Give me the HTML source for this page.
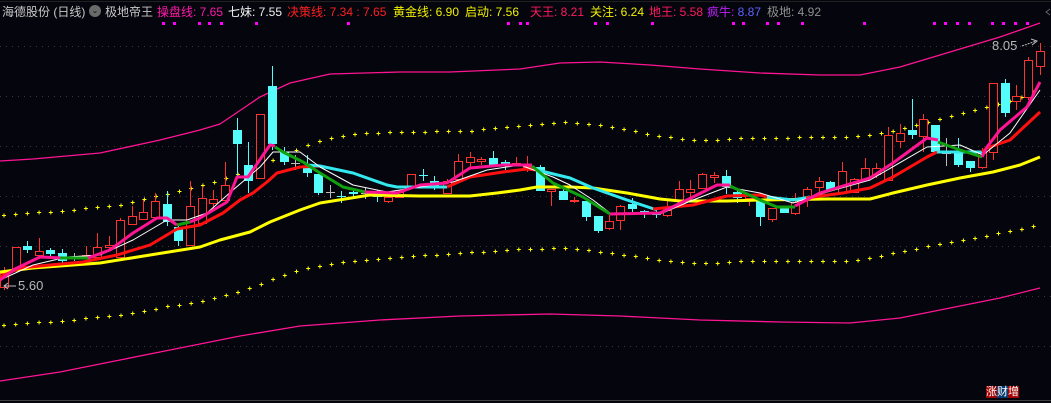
<!DOCTYPE html>
<html><head><meta charset="utf-8"><style>
html,body{margin:0;padding:0;background:#05050d;}
#w{position:relative;width:1051px;height:403px;overflow:hidden;background:#05050d;font-family:"Liberation Sans","Noto Sans CJK SC",sans-serif;font-size:12px;}
.t{position:absolute;top:5px;white-space:nowrap;line-height:14px;}
svg{position:absolute;left:0;top:0;}
</style></head><body><div id="w">
<svg id="s" width="1051" height="403" viewBox="0 0 1051 403"></svg>
<span class="t" style="left:2px;color:#c8c8c8">海德股份 (日线)</span>
<span class="t" style="left:89px;top:5px;width:12px;height:12px;border-radius:50%;background:#6a6a6a;color:#111;font-size:8px;text-align:center;line-height:12px">&#8964;</span>
<span class="t" style="left:105px;color:#c8c8c8">极地帝王</span>
<span class="t" style="left:157px;color:#ff1aa8">操盘线: 7.65</span>
<span class="t" style="left:228px;color:#f0f0f0">七妹: 7.55</span>
<span class="t" style="left:287px;color:#ff2020">决策线: 7.34 : 7.65</span>
<span class="t" style="left:393px;color:#f0f000">黄金线: 6.90</span>
<span class="t" style="left:465px;color:#f0f000">启动: 7.56</span>
<span class="t" style="left:530px;color:#ff1a60">天王: 8.21</span>
<span class="t" style="left:590px;color:#f0f000">关注: 6.24</span>
<span class="t" style="left:649px;color:#ff1a60">地王: 5.58</span>
<span class="t" style="left:707px;color:#c020ff">疯牛: <span style="color:#6060ff">8.87</span></span>
<span class="t" style="left:767px;color:#909090">极地: 4.92</span>
<span class="t" style="left:992px;top:39px;color:#b8b8b8;font-size:13px">8.05</span>
<span class="t" style="left:18px;top:279px;color:#b8b8b8;font-size:13px">5.60</span>
<span class="t" style="left:986px;top:386px;font-size:11px;line-height:13px;color:#fff"><span style="background:#a00000">涨</span><span style="background:#0a3a70">财</span><span style="background:#a00000">增</span></span>
</div>
<script>
var s=document.getElementById('s'),h='';
function pl(pts,c,w){h+='<polyline points="'+pts+'" fill="none" stroke="'+c+'" stroke-width="'+w+'" stroke-linejoin="round"/>';}
[46,96,146,196,246,296,346].forEach(function(y){h+='<line x1="0" y1="'+y+'.5" x2="1051" y2="'+y+'.5" stroke="#3a3a3a" stroke-width="1" stroke-dasharray="1,5"/>';});
h+='<line x1="0" y1="400.5" x2="1051" y2="400.5" stroke="#404040"/>';
h+='<line x1="0" y1="1.5" x2="1051" y2="1.5" stroke="#202020"/>';
[163,174,199,209,221,256,348,508,520,527,595,607,652,733,743,767,778,802,864,934,945,957,969,992,1003,1015,1027].forEach(function(x){h+='<rect x="'+(x-1)+'" y="22" width="3" height="3" fill="#ff00ff"/>';});
pl("0,161 33,159 100,153 160,140 200,130 220,124 260,97 290,83 330,74 400,72 450,72 520,69 560,63 600,62 650,65 700,69 760,73 820,75 860,75 900,67 950,52 1000,37 1040,23",'#ff1493',1.3);
pl("0,381 60,372 120,360 180,348 240,336 300,326 380,320 460,316 550,314 620,316 700,320 780,322 850,323 900,318 950,308 1000,298 1040,288",'#ff1493',1.3);
function interp(P,x){for(var i=0;i<P.length-1;i++){if(x>=P[i][0]&&x<=P[i+1][0]){var t=(x-P[i][0])/(P[i+1][0]-P[i][0]);return P[i][1]+t*(P[i+1][1]-P[i][1]);}}return P[P.length-1][1];}
var U=[[0,215],[61,211],[119,205],[166,194],[212,183],[247,171],[294,151],[317,141],[352,134],[387,132],[470,131],[503,127],[561,122],[585,123],[619,128],[654,135],[689,140],[713,140],[736,138],[841,137],[864,136],[899,130],[934,120],[969,111],[1003,103],[1040,90]];
var L=[[0,325],[60,321],[120,315],[170,306],[212,299],[247,289],[294,271],[340,262],[400,257],[460,253],[526,249],[561,248],[585,250],[619,254],[654,259],[689,263],[713,263],[747,261],[841,261],[864,259],[900,252],[940,244],[980,237],[1010,231],[1040,225]];
for(var i=0;i<89;i++){var x=3.5+i*11.7;[U,L].forEach(function(P){var y=Math.round(interp(P,x));h+='<path d="M'+(x-1.5)+' '+(y+.5)+'h4M'+(x+.5)+' '+(y-1.5)+'v4" stroke="#ffff00" stroke-width="1"/>';});}
var C=[[4,273,287,267,290,'r'],[16,247,268,247,268,'r'],[27,246,250,241,253,'c'],[39,251,255,238,255,'r'],[50,250,254,248,256,'c'],[62,253,261,249,263,'c'],[74,257,257,253,261,'g'],[86,255,256,246,258,'r'],[97,247,257,233,257,'r'],[109,245,247,236,250,'r'],[120,220,257,218,257,'r'],[132,216,224,206,224,'r'],[143,212,219,200,219,'r'],[155,201,217,193,217,'r'],[167,204,222,191,226,'c'],[178,227,241,225,246,'c'],[190,206,245,181,245,'r'],[202,198,223,187,223,'r'],[213,199,203,190,210,'r'],[225,185,200,162,200,'r'],[237,130,144,118,178,'c'],[248,165,181,142,193,'c'],[260,114,178,114,178,'r'],[272,86,144,66,150,'c'],[284,152,162,147,165,'c'],[295,163,163,155,170,'g'],[307,167,173,155,177,'c'],[318,174,193,174,195,'c'],[330,192,192,185,198,'g'],[341,196,196,191,203,'x'],[353,192,193,188,197,'c'],[365,193,193,188,199,'g'],[377,192,197,190,202,'c'],[388,197,201,195,203,'r'],[399,192,197,190,197,'r'],[411,174,187,174,187,'r'],[423,175,175,169,181,'x'],[434,181,186,176,190,'c'],[447,181,193,179,193,'r'],[458,161,179,154,179,'r'],[470,157,162,152,169,'r'],[481,159,161,157,165,'r'],[493,158,167,151,167,'c'],[505,162,165,160,170,'c'],[516,163,165,157,165,'r'],[527,166,166,156,172,'r'],[540,167,191,165,191,'c'],[551,189,191,189,206,'r'],[563,191,200,188,200,'c'],[574,200,200,197,203,'r'],[586,201,217,201,221,'c'],[598,216,231,216,233,'c'],[609,221,228,215,230,'r'],[620,206,220,205,230,'r'],[632,204,209,198,212,'c'],[644,211,214,210,218,'c'],[656,212,215,210,218,'c'],[667,210,215,200,217,'r'],[679,189,200,181,200,'r'],[690,189,192,180,197,'r'],[702,174,188,173,188,'r'],[714,175,177,172,183,'r'],[726,176,187,170,194,'c'],[737,192,198,190,203,'c'],[749,195,198,195,206,'r'],[760,200,217,200,226,'c'],[772,208,219,208,222,'r'],[784,208,213,208,213,'c'],[795,202,213,193,215,'r'],[807,189,199,187,207,'r'],[819,181,187,177,192,'r'],[830,182,190,181,190,'c'],[842,171,192,162,192,'r'],[854,179,192,178,192,'r'],[865,168,179,158,179,'r'],[876,168,174,163,178,'r'],[888,135,180,127,180,'r'],[900,133,141,124,148,'r'],[912,130,135,99,139,'c'],[923,119,136,114,152,'r'],[935,125,152,125,152,'c'],[946,153,153,138,166,'g'],[958,153,165,138,167,'c'],[970,161,168,161,172,'c'],[982,152,167,148,169,'r'],[993,83,152,83,160,'r'],[1005,83,113,79,117,'c'],[1016,96,101,85,110,'r'],[1028,60,97,57,100,'r'],[1040,51,66,43,75,'r']];
C.forEach(function(c){var x=c[0],t=c[5];
if(t=='r'){h+='<line x1="'+(x+.5)+'" y1="'+c[3]+'" x2="'+(x+.5)+'" y2="'+c[4]+'" stroke="#ff3232"/>';
 if(c[2]-c[1]<2)h+='<rect x="'+(x-4)+'" y="'+c[1]+'" width="9" height="2" fill="#ff3232"/>';
 else h+='<rect x="'+(x-3.5)+'" y="'+(c[1]+.5)+'" width="8" height="'+(c[2]-c[1])+'" fill="#05050d" stroke="#ff3232"/>';}
else if(t=='c'){h+='<line x1="'+(x+.5)+'" y1="'+c[3]+'" x2="'+(x+.5)+'" y2="'+c[4]+'" stroke="#54fcfc"/><rect x="'+(x-4)+'" y="'+c[1]+'" width="9" height="'+Math.max(2,c[2]-c[1])+'" fill="#54fcfc"/>';}
else{var col=t=='x'?'#54fcfc':'#bbbbbb';h+='<path d="M'+(x-4)+' '+(c[1]+.5)+'h9M'+(x+.5)+' '+c[3]+'V'+c[4]+'" stroke="'+col+'"/>';}
});
pl("0,272 33,268 100,263 150,255 200,247 220,240 250,232 270,222 300,210 320,203 370,195 420,196 470,196 497,193 520,190 537,187 570,187 593,188 627,193 660,199 680,201 727,201 760,200 827,199 870,199 893,193 927,185 960,178 993,172 1020,165 1040,157",'#ffff00',3);
pl("0,277 20,268 50,265 83,262 117,255 150,245 177,229 200,225 223,213 240,200 253,193 267,182 277,173 300,167 320,166",'#ff1010',3);
pl("307,165 320,166 353,173 387,185 397,187 447,187",'#33e8ee',3);
pl("447,187 470,177 503,172 527,169 537,170",'#ff1010',3);
pl("537,170 570,178 593,188 627,200 657,210",'#33e8ee',3);
pl("653,209 693,205 727,196 760,195 767,197",'#ff1010',3);
pl("767,197 793,200 810,197",'#33e8ee',3);
pl("806,198 843,193 870,188 893,177 927,157 937,152",'#ff1010',3);
pl("937,152 982,152",'#33e8ee',3);
pl("982,152 987,148 1010,140 1040,112",'#ff1010',3);
pl("0,280 33,265 67,257 100,255 133,240 167,220 187,220 207,213 233,190 260,167 273,152 300,152 320,167 353,185 387,192 420,187 453,182 487,170 520,165 553,177 570,185 593,200 610,213 660,214 693,200 727,187 760,193 793,203 827,192 870,180 927,147 960,145 983,155 1010,133 1040,90",'#ffffff',1);
pl("0,280 15,269 40,257 63,258",'#ff1493',3);
pl("60,258 90,258",'#10a010',3);
pl("88,258 110,250 133,233 157,218 167,218 177,225",'#ff1493',3);
pl("177,225 190,222",'#10a010',3);
pl("190,222 200,218 227,202 237,177 248,177 270,145 275,146",'#ff1493',3);
pl("275,147 283,152 303,162 320,173 343,187 365,192",'#10a010',3);
pl("365,192 397,193 420,185 447,183 470,168 503,165 532,165",'#ff1493',3);
pl("532,166 553,183 583,197 610,214",'#10a010',3);
pl("610,214 660,213 693,197 717,185 730,185",'#ff1493',3);
pl("730,186 760,200 777,207 795,207",'#10a010',3);
pl("795,206 820,193 843,186 870,178 893,163 927,138 938,140",'#ff1493',3);
pl("938,142 960,150 982,157",'#10a010',3);
pl("982,157 987,147 1000,130 1027,107 1040,82",'#ff1493',3);
h+='<path d="M1022 46 L1036 41" stroke="#bbb" stroke-dasharray="2,1"/><path d="M1031 39 L1037 41 L1032 45" stroke="#bbb" fill="none"/>';
h+='<path d="M4 286 H16 M8 283 L4 286 L8 289" stroke="#bbb" fill="none"/>';
h+='<path d="M1050 9 L1046 12 L1050 15" stroke="#666" fill="none"/>';
s.innerHTML=h;
</script></body></html>
